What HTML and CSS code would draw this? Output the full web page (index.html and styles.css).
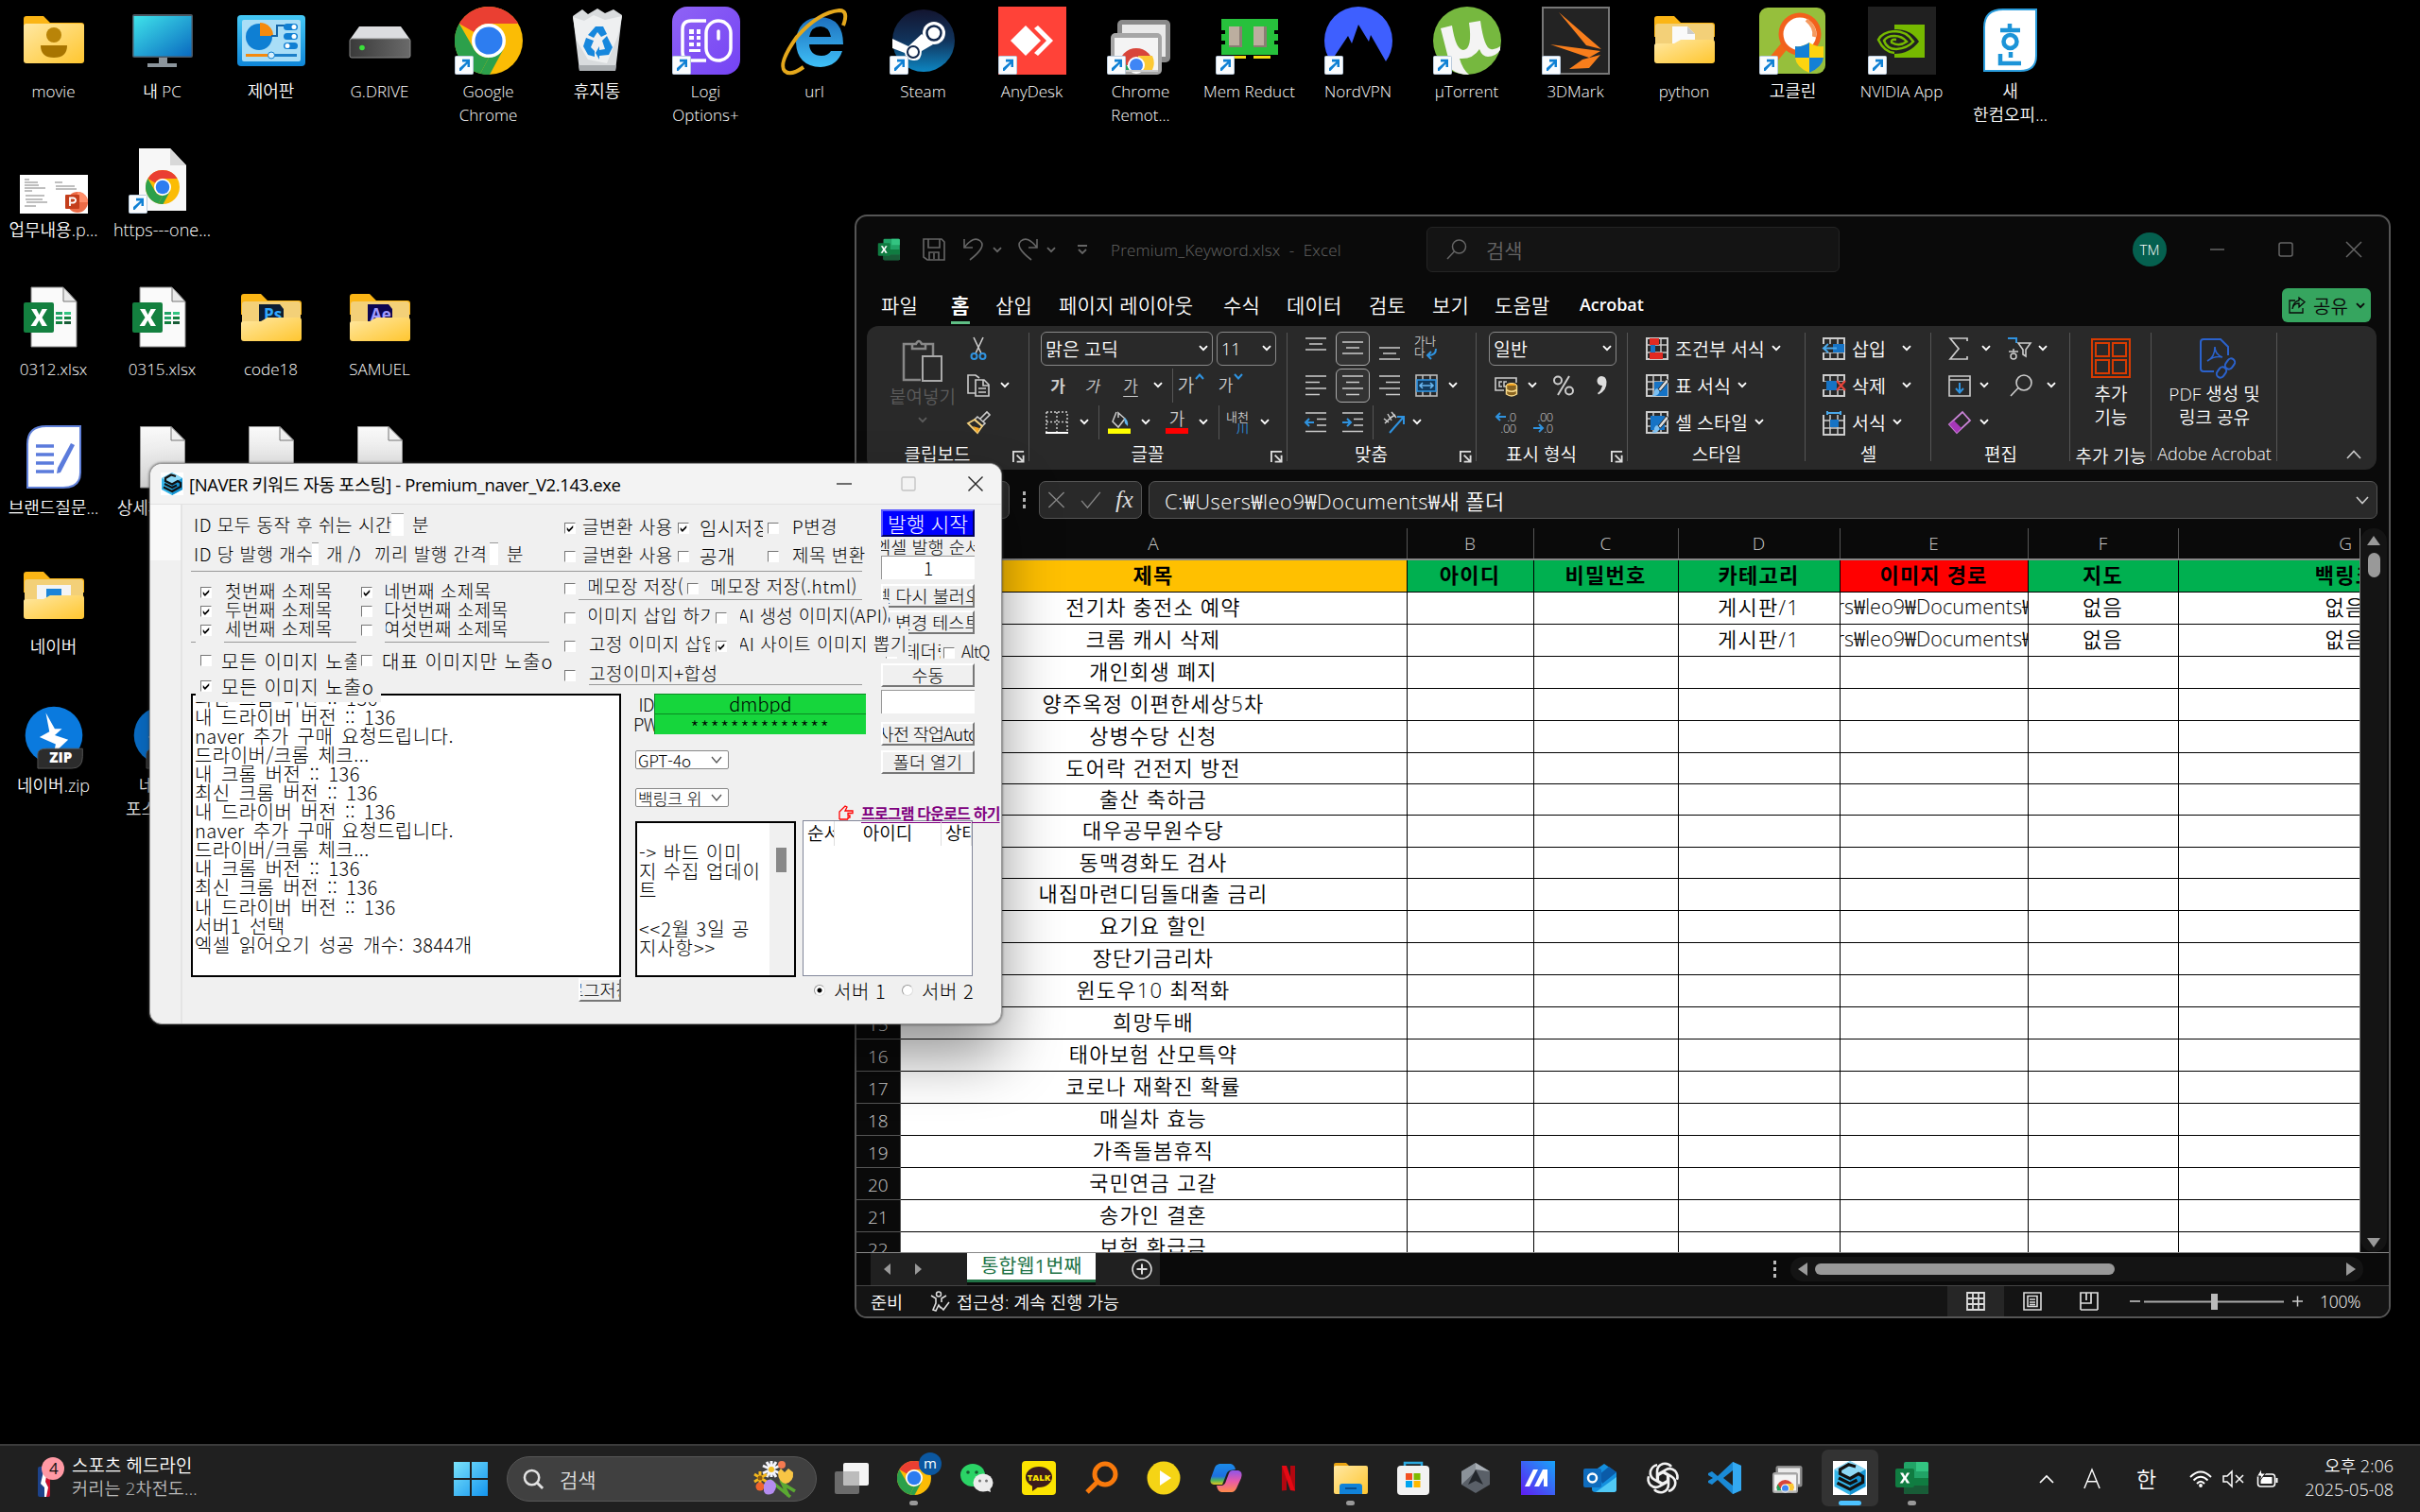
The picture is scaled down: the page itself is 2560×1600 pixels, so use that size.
FILE: index.html
```html
<!DOCTYPE html>
<html lang="ko">
<head>
<meta charset="utf-8">
<title>Desktop</title>
<link rel="stylesheet" href="styles.css">
</head>
<body>
<svg class="defs" width="0" height="0" aria-hidden="true">
<defs>
<linearGradient id="gFold" x1="0" y1="0" x2="1" y2="1"><stop offset="0" stop-color="#ffe8a3"/><stop offset="1" stop-color="#ffc62f"/></linearGradient>
<linearGradient id="gPc" x1="0" y1="0" x2="1" y2="1"><stop offset="0" stop-color="#3fe3ea"/><stop offset="1" stop-color="#0a6ac0"/></linearGradient>
<linearGradient id="gCtl" x1="0" y1="0" x2="0" y2="1"><stop offset="0" stop-color="#45c8f5"/><stop offset="1" stop-color="#0f86d8"/></linearGradient>
<linearGradient id="gLogi" x1="0" y1="0" x2="1" y2="1"><stop offset="0" stop-color="#8f63f5"/><stop offset="1" stop-color="#7443f4"/></linearGradient>
<linearGradient id="gSteam" x1="0" y1="0" x2="0" y2="1"><stop offset="0" stop-color="#131530"/><stop offset=".5" stop-color="#11345c"/><stop offset="1" stop-color="#0d86c2"/></linearGradient>
<linearGradient id="gWin" x1="0" y1="0" x2="1" y2="1"><stop offset="0" stop-color="#7be3fb"/><stop offset="1" stop-color="#1394ee"/></linearGradient>
<linearGradient id="gPaper" x1="0" y1="0" x2="0" y2="1"><stop offset="0" stop-color="#fafafa"/><stop offset="1" stop-color="#dcdcdc"/></linearGradient>
<linearGradient id="gDrive" x1="0" y1="0" x2="1" y2="0"><stop offset="0" stop-color="#3a3a3a"/><stop offset="1" stop-color="#6a6a6a"/></linearGradient>
<linearGradient id="gIe" x1="0" y1="0" x2="0" y2="1"><stop offset="0" stop-color="#1d6fbe"/><stop offset="1" stop-color="#3fc0f7"/></linearGradient>
<linearGradient id="gCopA" x1="0" y1="0" x2="0" y2="1"><stop offset="0" stop-color="#1b8be8"/><stop offset=".6" stop-color="#1d6fe0"/><stop offset=".8" stop-color="#4fb55b"/><stop offset="1" stop-color="#e9c81e"/></linearGradient>
<linearGradient id="gCopB" x1="0" y1="0" x2="0" y2="1"><stop offset="0" stop-color="#8f55e8"/><stop offset=".5" stop-color="#e85aa8"/><stop offset="1" stop-color="#ff8a4a"/></linearGradient>
<linearGradient id="gMa" x1="1" y1="0" x2="0" y2="1"><stop offset="0" stop-color="#18a5f8"/><stop offset="1" stop-color="#5f1cf2"/></linearGradient>

<symbol id="shortcut" viewBox="0 0 20 20"><rect x=".5" y=".5" width="19" height="19" rx="1" fill="#fafcfe" stroke="#bcd"/><path d="M5 16V13L12.500 6.500H8V3.800H16V12H13.500V8.600L6.500 16Z" fill="#0f80d4"/></symbol>
<symbol id="folder" viewBox="0 0 64 52"><path d="M0 4q0-3 3-3h18l7 7h33q3 0 3 3v12H0z" fill="#fbb515"/><rect x="0" y="9" width="64" height="42" rx="3" fill="url(#gFold)"/></symbol>
<symbol id="folderOpen" viewBox="0 0 64 52"><path d="M0 4q0-3 3-3h18l7 7h33q3 0 3 3v12H0z" fill="#fbb515"/><rect x="1" y="9" width="62" height="40" rx="3" fill="#f3d078"/></symbol>
<symbol id="folderFront" viewBox="0 0 64 26"><path d="M0 6Q0 4 3 4H21L28 0H61Q64 0 64 3V22Q64 25 61 25H3Q0 25 0 22Z" fill="url(#gFold)"/></symbol>
<symbol id="chrome" viewBox="0 0 72 72"><circle cx="36" cy="36" r="36" fill="#fbbc05"/><path d="M36 0A36 36 0 0 1 67.200 18H36A18 18 0 0 0 20.400 27L4.800 18A36 36 0 0 1 36 0Z" fill="#ea3f32"/><path d="M4.800 18L20.400 45A18 18 0 0 0 36 54L27 71A36 36 0 0 1 4.800 18Z" fill="#2ca04b"/><path d="M36 54L51.600 45L37 72A36 36 0 0 1 27 71Z" fill="#2ca04b"/><circle cx="36" cy="36" r="18" fill="#fff"/><circle cx="36" cy="36" r="14.500" fill="#2d7df0"/></symbol>
<symbol id="xlFile" viewBox="0 0 72 72"><path d="M12 3H46L60 18V66H12Z" fill="#fafafa" stroke="#888"/><path d="M46 3V18H60Z" fill="#e9e9e9" stroke="#777"/><rect x="4" y="19" width="32" height="32" rx="2" fill="#13803f"/><path d="M12 26h5.500l3 6 3-6H29l-5.500 9L29 44h-5.500l-3.200-6-3.300 6H11.500L17.500 35z" fill="#fff"/><path d="M38 29h7v3h-7zM38 34h7v3h-7z" fill="#21a366"/><path d="M47 29h7v3h-7z" fill="#33c481"/><path d="M47 34h7v3h-7zM38 39h7v3h-7z" fill="#13803f"/><path d="M47 39h7v3h-7z" fill="#185c37"/></symbol>
<symbol id="paper" viewBox="0 0 72 72"><path d="M12.500 3.500H45L59.500 18V68H12.500Z" fill="url(#gPaper)" stroke="#999"/><path d="M45 3.500V18H59.500Z" fill="#f0f0f0" stroke="#777"/></symbol>
<symbol id="zip" viewBox="0 0 72 72"><circle cx="36" cy="36" r="32" fill="#0a7ade"/><path d="M27 11L37 29H45L37 36L52 41L36 56L38 46L20 38L31 32Z" fill="#fff"/><path d="M18 57Q18 51 28 51H68V60Q68 73 56 73H18Z" fill="#2c2c2c" stroke="#555"/></symbol>
<symbol id="xl" viewBox="0 0 36 36"><rect x="9" y="1" width="26" height="34" rx="2" fill="#21a366"/><path d="M22 1h11q2 0 2 2v8H22z" fill="#33c481"/><path d="M9 18H35v8H9z" fill="#107c41"/><path d="M9 26H35v7q0 2-2 2H11q-2 0-2-2z" fill="#185c37"/><rect x="0" y="8" width="20" height="20" rx="2" fill="#107c41"/><path d="M5 12.500h3.200l2 3.800 2-3.800h3l-3.500 5.500 3.600 5.500H12l-2-3.800-2.100 3.800H4.700L8.400 18z" fill="#fff"/></symbol>
<symbol id="cube" viewBox="0 0 24 24"><rect width="24" height="24" fill="#fff"/><path d="M12 0L23 6V18L12 24L1 18V6Z" fill="#35b6ea"/><path d="M12 0L23 6L12 12L1 6Z" fill="#8ed9f6"/><path d="M12 12L23 6V18L12 24Z" fill="#1593d2"/><path d="M16 4L11 2.500L5 6V9L12 12.500L18 9L21 11V15L12 20L3 15.500M4 12L12 16L17 13.500" fill="none" stroke="#111" stroke-width="2.200"/></symbol>
<symbol id="crd" viewBox="0 0 72 72"><rect x="11" y="14" width="56" height="45" rx="5" fill="#8a8a8a"/><rect x="16" y="19" width="46" height="34" fill="#e9e9e9"/><rect x="4" y="28" width="54" height="44" rx="5" fill="#a6a6a6"/><rect x="8" y="33" width="46" height="34" fill="#f4f4f4"/><path d="M13 62A18 18 0 0 1 49 62Z" fill="#d8453a"/><path d="M14 67A18 18 0 0 1 15 53L24 67Z" fill="#20a05a"/><path d="M33 52H48A18 18 0 0 1 48 67H33Z" fill="#fcc934"/><circle cx="31" cy="62" r="9" fill="#fff"/><circle cx="31" cy="62" r="7" fill="#3f86f5"/><rect x="8" y="67" width="46" height="2" fill="#ccc"/></symbol>
<symbol id="chev" viewBox="0 0 10 7"><path d="M1 1.200L5 5.200L9 1.200" fill="none" stroke="currentColor" stroke-width="1.900"/></symbol>
<symbol id="launch" viewBox="0 0 14 14"><path d="M1 13V1H13M5 5L12 12M12.500 5V12.500H5" fill="none" stroke="#ddd" stroke-width="2"/></symbol>
<symbol id="gridIco" viewBox="0 0 24 24"><rect x="1" y="1" width="22" height="22" fill="none" stroke="#ccc" stroke-width="2"/><path d="M8 1V23M16 1V23M1 8H23M1 16H23" stroke="#ccc" stroke-width="1.500"/></symbol>
<symbol id="brush" viewBox="0 0 24 24"><path d="M22 5L13 16L15.500 18L24 8Z" fill="#ddd" stroke="#292929"/><path d="M12 15Q15 17 14 20Q11 24 6 23Q9 22 9 18Q10 15 12 15Z" fill="#7cc0f2"/></symbol>
<symbol id="tick" viewBox="0 0 13 13"><path d="M3 5.500L5.300 8L10 3.200V6L5.300 10.800L3 8.500Z" fill="#000"/></symbol>
</defs>
</svg>

<main class="desktop">

<section class="icons">
 <figure><svg viewBox="0 0 72 72"><use href="#folder" x="4" y="9" width="64" height="52"/><circle cx="36" cy="30" r="8" fill="#b98408"/><path d="M22 41H50Q50 54 36 54Q22 54 22 41Z" fill="#a87500"/></svg><figcaption>movie</figcaption></figure>
 <figure><svg viewBox="0 0 72 72"><rect x="4" y="8" width="64" height="46" rx="2" fill="#4b5560"/><rect x="5.500" y="10" width="61" height="42.500" fill="url(#gPc)"/><path d="M32 54h9v6h10v4H20v-4h12z" fill="#8c959c"/></svg><figcaption>내 PC</figcaption></figure>
 <figure><svg viewBox="0 0 72 72"><rect x="0" y="9" width="72" height="54" rx="4" fill="url(#gCtl)"/><rect x="5" y="14" width="62" height="44" rx="2" fill="#a9def7"/><circle cx="23" cy="32" r="14" fill="#0f7fd3"/><path d="M24 17A14 14 0 0 1 38 31H24Z" fill="#f58a0e"/><path d="M36 31h6V20h8" fill="none" stroke="#1264a8" stroke-width="2"/><rect x="49" y="18" width="15" height="7" rx="3.500" fill="#0f7fd3"/><rect x="49" y="28" width="15" height="7" rx="3.500" fill="#0f7fd3"/><rect x="49" y="38" width="15" height="7" rx="3.500" fill="#0f7fd3"/><circle cx="60" cy="21.500" r="2.500" fill="#fff"/><circle cx="60" cy="31.500" r="2.500" fill="#fff"/><circle cx="53" cy="41.500" r="2.500" fill="#fff"/><path d="M9 51.500H36" stroke="#f58a0e" stroke-width="3"/><path d="M36 51.500H63" stroke="#1c7fc8" stroke-width="3"/><circle cx="36" cy="51.500" r="3.500" fill="#d8f0fc" stroke="#0f7fd3"/></svg><figcaption class="ko">제어판</figcaption></figure>
 <figure><svg viewBox="0 0 72 72"><path d="M14 21H58L68 35H4Z" fill="#dcdde0"/><rect x="4" y="34" width="64" height="20" rx="2" fill="url(#gDrive)" stroke="#888"/><circle cx="17" cy="43.500" r="2.800" fill="#3be03b"/></svg><figcaption>G.DRIVE</figcaption></figure>
 <figure><svg viewBox="0 0 72 72"><use href="#chrome" width="72" height="72"/><use href="#shortcut" x="0" y="52" width="20" height="20"/></svg><figcaption>Google<br>Chrome</figcaption></figure>
 <figure><svg viewBox="0 0 72 72"><path d="M10 10L20 3L26 8L36 2L44 7L53 3L62 9L55 68H17Z" fill="#d9dcde"/><path d="M10 11L22 15L32 9L44 14L62 10L58 30L46 60L26 56L14 36Z" fill="#eef0f1"/><path d="M16 62H56L55 68H17Z" fill="#a9adb0"/><path d="M34 21L42 21L46 29L40 32L36 27L32 33L26 30Z M24 33L32 36L29 43L33 47V53L26 51L21 42Z M46 31L52 43L48 51L38 52V56L34 49L38 42V46L44 45L41 36Z" fill="#1687dd"/></svg><figcaption class="ko">휴지통</figcaption></figure>
 <figure><svg viewBox="0 0 72 72"><rect width="72" height="72" rx="16" fill="url(#gLogi)"/><path d="M36 15H20Q11 15 11 24V48Q11 57 20 57H36" fill="none" stroke="#fff" stroke-width="3.500"/><rect x="36" y="15" width="26" height="42" rx="13" fill="none" stroke="#fff" stroke-width="3.500"/><path d="M49 26V34" stroke="#fff" stroke-width="3.500" stroke-linecap="round"/><path d="M18 24h5v5h-5zM26 24h4v5h-4zM18 31h5v4h-5zM26 31h4v4h-4zM18 38h5v4h-5zM26 38h4v4h-4zM18 45h12v3H18z" fill="#fff"/><use href="#shortcut" x="0" y="52" width="20" height="20"/></svg><figcaption>Logi<br>Options+</figcaption></figure>
 <figure><svg viewBox="0 0 72 72"><path d="M66 40H30Q31 52 43 52Q50 52 53 47H65Q60 63 42 64Q17 63 16 38Q17 12 42 11Q66 12 66 40ZM30 32H53Q51 21 42 21Q32 21 30 32Z" fill="url(#gIe)"/><path d="M66 20Q72 4 62 4Q40 6 17 32Q-3 60 4 68Q10 74 24 64" fill="none" stroke="#e5a81c" stroke-width="4"/></svg><figcaption>url</figcaption></figure>
 <figure><svg viewBox="0 0 72 72"><circle cx="36" cy="36" r="33" fill="url(#gSteam)"/><circle cx="47" cy="28" r="12" fill="#fff"/><circle cx="47" cy="28" r="7.500" fill="#fff" stroke="#10264a" stroke-width="2.500"/><path d="M3 34L20 42L34 29L46 40L34 47Q34 58 25 57Q17 56 16 49L3 44Z" fill="#fff"/><circle cx="25" cy="48" r="6" fill="none" stroke="#10264a" stroke-width="2"/><use href="#shortcut" x="0" y="52" width="20" height="20"/></svg><figcaption>Steam</figcaption></figure>
 <figure><svg viewBox="0 0 72 72"><rect width="72" height="72" fill="#ff4238"/><path d="M29 20L45 36L29 52L13 36Z" fill="#fff"/><path d="M38 23L42 20L58 36L42 52L38 49L51 36Z" fill="#fff"/><use href="#shortcut" x="0" y="52" width="20" height="20"/></svg><figcaption>AnyDesk</figcaption></figure>
 <figure><svg viewBox="0 0 72 72"><use href="#crd" width="72" height="72"/><use href="#shortcut" x="0" y="52" width="20" height="20"/></svg><figcaption>Chrome<br>Remot...</figcaption></figure>
 <figure><svg viewBox="0 0 72 72"><path d="M6 13H66V25H62V29H66V36H62V40H66V51H6V40H10V36H6V29H10V25H6Z" fill="#27c13c"/><path d="M14 21H28V43H14ZM40 21H54V43H40Z" fill="#8b7d74"/><path d="M14 21H25V41H14ZM40 21H51V41H40Z" fill="#bcae9f"/><path d="M13 52H32V55H13ZM40 52H58V55H40Z" fill="#f4dd13"/><use href="#shortcut" x="0" y="52" width="20" height="20"/></svg><figcaption>Mem Reduct</figcaption></figure>
 <figure><svg viewBox="0 0 72 72"><path d="M7 58Q0 48 0 36A36 36 0 0 1 72 36Q72 48 65 58L49 30L47 37L36 19L29 39L25 31Z" fill="#3e5fff"/><use href="#shortcut" x="0" y="52" width="20" height="20"/></svg><figcaption>NordVPN</figcaption></figure>
 <figure><svg viewBox="0 0 72 72"><circle cx="36" cy="36" r="36" fill="#76b83f"/><path d="M8 23L20 20Q24 46 32 46Q42 45 38 17L50 15Q54 44 61 45Q66 46 71 42V46Q66 53 58 53Q52 53 49 45Q42 56 28 55Q31 66 38 72Q26 72 19 66Z" fill="#f4f4f4"/><use href="#shortcut" x="0" y="52" width="20" height="20"/></svg><figcaption>µTorrent</figcaption></figure>
 <figure><svg viewBox="0 0 72 72"><rect x="1" y="1" width="70" height="70" fill="#232323" stroke="#777" stroke-width="2"/><path d="M18 6L63 45L47 41ZM9 40L62 47L50 54ZM62 51L50 65L29 66L43 56Z" fill="#f97e1c"/><use href="#shortcut" x="0" y="52" width="20" height="20"/></svg><figcaption>3DMark</figcaption></figure>
 <figure><svg viewBox="0 0 72 72"><use href="#folderOpen" x="4" y="9" width="64" height="52"/><path d="M23 21H39L47 29V45H23Z" fill="#fafafa"/><path d="M39 21V29H47Z" fill="#ccc"/><path d="M27 40A10 10 0 0 1 43 40Z" fill="#d93a2c"/><use href="#folderFront" x="4" y="35" width="64" height="26"/></svg><figcaption>python</figcaption></figure>
 <figure><svg viewBox="0 0 72 72"><rect y="1" width="70" height="70" rx="9" fill="#96bf3c"/><path d="M14 57L28 40" stroke="#f06818" stroke-width="9"/><circle cx="43" cy="29" r="20" fill="#fff" stroke="#f2611c" stroke-width="5"/><path d="M50 14Q60 22 58 32" stroke="#f59a60" stroke-width="4" fill="none"/><path d="M38 42Q46 43 53 38Q60 43 68 42V54Q67 64 53 70Q39 64 38 54Z" fill="#fdd40f"/><path d="M53 38Q46 43 38 42V54H53ZM53 54H68Q67 64 53 70Z" fill="#1380d6"/><use href="#shortcut" x="0" y="52" width="20" height="20"/></svg><figcaption class="ko">고클린</figcaption></figure>
 <figure><svg viewBox="0 0 72 72"><rect width="72" height="72" fill="#202020"/><path d="M28 19H60V54H28Z" fill="#76b900"/><path d="M28 24Q46 24 54 37Q44 50 28 50Q18 50 9 35Q16 25 28 24Z" fill="#202020"/><path d="M28 26Q15 27 11 35Q17 48 28 49M28 31Q20 31 17 36Q20 45 30 45Q42 44 48 37Q41 26 28 26M28 31Q36 31 41 37Q33 43 25 38Q24 34 30 35" fill="none" stroke="#76b900" stroke-width="2.500"/><use href="#shortcut" x="0" y="52" width="20" height="20"/></svg><figcaption>NVIDIA App</figcaption></figure>
 <figure><svg viewBox="0 0 72 72"><path d="M8 68V22Q8 3 28 3H63V52Q63 68 46 68Z" fill="#fff" stroke="#2b9ddd" stroke-width="2"/><path d="M25 25H46M35 18V25M25 50V60H47" stroke="#1c94d8" stroke-width="4.500" fill="none"/><circle cx="35.500" cy="37" r="7" fill="none" stroke="#1c94d8" stroke-width="4.500"/><path d="M36 48V54" stroke="#1c94d8" stroke-width="4.500"/></svg><figcaption class="ko">새<br>한컴오피...</figcaption></figure>

 <figure class="r2"><svg viewBox="0 0 72 72"><rect y="31" width="72" height="41" fill="#fff"/><path d="M5 36h5M5 39h14M5 42h15M5 45h22M5 48h8M6 53h20M6 57h18M7 60h22M5 64h12M37 39h8M38 43h20M38 46h22" stroke="#aaa" stroke-width="1.500"/><circle cx="61" cy="60" r="11" fill="#ed6c47"/><path d="M61 49A11 11 0 0 1 72 60H61Z" fill="#ff8f6b"/><rect x="48" y="52" width="15" height="15" rx="1" fill="#c43e1c"/><path d="M53 64V55.500H56.500Q59.500 56 59 58.500Q58.500 61 54 60.500" stroke="#fff" stroke-width="1.800" fill="none"/></svg><figcaption class="ko">업무내용.p...</figcaption></figure>
 <figure><svg viewBox="0 0 72 72"><path d="M11 3H44L61 21V69H11Z" fill="#f7f7f7"/><path d="M44 3V21H61Z" fill="#d8d8d8"/><use href="#chrome" x="18" y="26" width="36" height="36"/><use href="#shortcut" x="0" y="52" width="20" height="20"/></svg><figcaption class="ko">https---one...</figcaption></figure>

 <figure class="r3"><svg viewBox="0 0 72 72"><use href="#xlFile"/></svg><figcaption>0312.xlsx</figcaption></figure>
 <figure><svg viewBox="0 0 72 72"><use href="#xlFile"/></svg><figcaption>0315.xlsx</figcaption></figure>
 <figure><svg viewBox="0 0 72 72"><use href="#folderOpen" x="4" y="9" width="64" height="52"/><path d="M23 21H45L49 26V46H23Z" fill="#0c1d33"/><text x="28" y="38" class="adobe ps">Ps</text><use href="#folderFront" x="4" y="35" width="64" height="26"/></svg><figcaption>code18</figcaption></figure>
 <figure><svg viewBox="0 0 72 72"><use href="#folderOpen" x="4" y="9" width="64" height="52"/><path d="M23 21H45L49 26V46H23Z" fill="#0b0552"/><text x="26" y="38" class="adobe ae">Ae</text><use href="#folderFront" x="4" y="35" width="64" height="26"/></svg><figcaption>SAMUEL</figcaption></figure>

 <figure class="r4"><svg viewBox="0 0 72 72"><path d="M8 68V22Q8 3 28 3H64V52Q64 68 46 68Z" fill="#fff" stroke="#6080d8" stroke-width="2"/><path d="M17 24H36M17 33H36M17 42H36M17 51H36" stroke="#5b7bdc" stroke-width="3.500"/><path d="M54 21L58 23L43 52L39 53L40 47Z" fill="#5b7bdc"/></svg><figcaption class="ko">브랜드질문...</figcaption></figure>
 <figure><svg viewBox="0 0 72 72"><use href="#paper"/></svg><figcaption class="ko">상세페이지...</figcaption></figure>
 <figure><svg viewBox="0 0 72 72"><use href="#paper"/></svg></figure>
 <figure><svg viewBox="0 0 72 72"><use href="#paper"/></svg></figure>

 <figure class="r5"><svg viewBox="0 0 72 72"><use href="#folderOpen" x="4" y="9" width="64" height="52"/><path d="M18 24H54V46H18Z" fill="#f4f4f4"/><path d="M28 28H44V46H28Z" fill="#1b84d8"/><use href="#folderFront" x="4" y="35" width="64" height="26"/></svg><figcaption class="ko">네이버</figcaption></figure>

 <figure class="r6"><svg viewBox="0 0 72 76"><use href="#zip" width="72" height="76"/><text x="31" y="69" class="ziptext">ZIP</text></svg><figcaption class="ko">네이버.zip</figcaption></figure>
 <figure><svg viewBox="0 0 72 76"><use href="#zip" width="72" height="76"/></svg><figcaption class="ko">네이버<br>포스팅.zip</figcaption></figure>
</section>

<section class="excel">
 <header class="xl-title">
  <svg class="xl-logo" viewBox="0 0 36 36"><use href="#xl"/></svg>
  <svg class="q-save" viewBox="0 0 24 24"><path d="M1 1H20L23 4V23H5L1 20Z M6 1V10H18V1 M7 23V15H17V23 M12 16V22" fill="none" stroke="currentColor" stroke-width="1.600"/></svg>
  <svg class="q-undo" viewBox="0 0 24 24"><path d="M2 1V10H11M2 10Q12 -3 19 3Q26 9 8 23" fill="none" stroke="currentColor" stroke-width="1.600"/></svg>
  <svg class="chev"><use href="#chev"/></svg>
  <svg class="q-redo" viewBox="0 0 24 24"><path d="M22 1V10H13M22 10Q12 -3 5 3Q-2 9 16 23" fill="none" stroke="currentColor" stroke-width="1.600"/></svg>
  <svg class="chev"><use href="#chev"/></svg>
  <svg class="q-more" viewBox="0 0 12 12"><path d="M1 2H11M2 6L6 10L10 6" fill="none" stroke="currentColor" stroke-width="1.800"/></svg>
  <span class="xl-name">Premium_Keyword.xlsx&nbsp; -&nbsp; Excel</span>
  <div class="xl-search"><svg viewBox="0 0 22 22"><circle cx="13.500" cy="8" r="7" fill="none" stroke="currentColor" stroke-width="1.500"/><path d="M8.500 13L1 21" stroke="currentColor" stroke-width="1.500"/></svg>검색</div>
  <span class="avatar">TM</span>
  <svg class="wc" viewBox="0 0 16 16"><path d="M0 8H15" stroke="currentColor" stroke-width="1.500"/></svg>
  <svg class="wc" viewBox="0 0 16 16"><rect x="1" y="1" width="14" height="14" rx="2" fill="none" stroke="currentColor" stroke-width="1.500"/></svg>
  <svg class="wc" viewBox="0 0 16 16"><path d="M0 0L16 16M16 0L0 16" stroke="currentColor" stroke-width="1.500"/></svg>
 </header>
 <nav class="tabs"><span class="t1">파일</span><span class="t2">홈</span><span class="t3">삽입</span><span class="t4">페이지 레이아웃</span><span class="t5">수식</span><span class="t6">데이터</span><span class="t7">검토</span><span class="t8">보기</span><span class="t9">도움말</span><span class="t10">Acrobat</span>
  <span class="share"><svg viewBox="0 0 18 18"><path d="M7 4H1V17H15V12M4 13Q5 7 11 7V11L17 5.500L11 1V4Q5 5 4 13Z" fill="none" stroke="#0a0a0a" stroke-width="1.300"/></svg>공유<svg class="chev"><use href="#chev"/></svg></span>
 </nav>

 <div class="ribbon">
  <div class="group g-clip">
   <div class="paste"><svg viewBox="0 0 42 46"><path d="M12 5H1V43H19M24 5H32V17M10 10V5H14Q17 -1 20 5H24V10Z" transform="translate(0 1)" fill="none" stroke="#888" stroke-width="2.500"/><rect x="21" y="19" width="20" height="26" fill="none" stroke="#aaa" stroke-width="2"/></svg><span>붙여넣기</span><svg class="chev"><use href="#chev"/></svg></div>
   <div class="rr"><svg class="i24" viewBox="0 0 24 24"><path d="M7 0L15 17M17 0L9 17" stroke="#ccc" stroke-width="1.600"/><circle cx="7.500" cy="20" r="3" fill="none" stroke="#2f93e0" stroke-width="2"/><circle cx="16.500" cy="20" r="3" fill="none" stroke="#2f93e0" stroke-width="2"/></svg></div>
   <div class="rr"><svg class="i24" viewBox="0 0 24 24"><path d="M9 20H1V1H9L13 4M9 6H18L23 11V23H9ZM17 6V12H23M12 15H20M12 19H20" fill="none" stroke="#ccc" stroke-width="1.600"/></svg><svg class="chev"><use href="#chev"/></svg></div>
   <div class="rr"><svg class="i24" viewBox="0 0 24 24"><path d="M14 8L21 1L24 4L17 11M11 6L19 13L16 16L8 9Z" fill="none" stroke="#ccc" stroke-width="1.600"/><path d="M8 9L16 16L11 23L1 13Z" fill="none" stroke="#f2cf7c" stroke-width="1.800"/><path d="M6 16L13 18L11 23Z" fill="#f5a623"/></svg></div>
   <div class="glabel"><span>클립보드</span><svg><use href="#launch"/></svg></div>
  </div>
  <div class="group g-font">
   <div class="rr"><span class="combo c-font">맑은 고딕<svg class="chev"><use href="#chev"/></svg></span><span class="combo c-size">11<svg class="chev"><use href="#chev"/></svg></span></div>
   <div class="rr f2"><b>가</b><i>가</i><u>가</u><svg class="chev"><use href="#chev"/></svg><s></s><span class="grow">가<svg viewBox="0 0 10 7"><path d="M1 6L5 1.500L9 6" fill="none" stroke="#2f93e0" stroke-width="2"/></svg></span><span class="grow sm">가<svg viewBox="0 0 10 7"><path d="M1 1L5 5.500L9 1" fill="none" stroke="#2f93e0" stroke-width="2"/></svg></span></div>
   <div class="rr f3"><svg class="i24" viewBox="0 0 24 24"><path d="M1 1H23V22M1 1V22M12 1V22M1 11.500H23" fill="none" stroke="#ccc" stroke-width="1.500" stroke-dasharray="2 2"/><path d="M0 23H24" stroke="#fff" stroke-width="2"/></svg><svg class="chev"><use href="#chev"/></svg><s></s><svg class="i24" viewBox="0 0 24 24"><path d="M9 1L5 11L11 17L18 8L11 2V7" fill="none" stroke="#ccc" stroke-width="1.500"/><path d="M17 7Q22 9 21 16L18 13Z" fill="#5fb2ea"/><rect y="18.500" width="24" height="5.500" fill="#ff0"/></svg><svg class="chev"><use href="#chev"/></svg><span class="fcol">가</span><svg class="chev"><use href="#chev"/></svg><s></s><span class="hanja">내천<br><em>川</em></span><svg class="chev"><use href="#chev"/></svg></div>
   <div class="glabel"><span>글꼴</span><svg><use href="#launch"/></svg></div>
  </div>
  <div class="group g-align">
   <div class="rr a1"><svg class="i24" viewBox="0 0 24 24"><path d="M1 1H23M5 7H19M1 13H23" stroke="#ccc" stroke-width="1.600"/></svg><span class="on"><svg class="i24" viewBox="0 0 24 24"><path d="M1 5H23M5 11H19M1 17H23" stroke="#ccc" stroke-width="1.600"/></svg></span><svg class="i24" viewBox="0 0 24 24"><path d="M1 11H23M5 17H19M1 23H23" stroke="#ccc" stroke-width="1.600"/></svg><span class="wrap">가나<br>다<svg viewBox="0 0 12 12"><path d="M11 0Q11 7 3 7M6 3L2 7L6 11" fill="none" stroke="#2f93e0" stroke-width="2"/></svg></span></div>
   <div class="rr a1"><svg class="i24" viewBox="0 0 24 24"><path d="M1 2H23M1 8.500H16M1 15H23M1 21.500H16" stroke="#ccc" stroke-width="1.600"/></svg><span class="on"><svg class="i24" viewBox="0 0 24 24"><path d="M1 2H23M5 8.500H19M1 15H23M5 21.500H19" stroke="#ccc" stroke-width="1.600"/></svg></span><svg class="i24" viewBox="0 0 24 24"><path d="M1 2H23M8 8.500H23M1 15H23M8 21.500H23" stroke="#ccc" stroke-width="1.600"/></svg><svg class="i24" viewBox="0 0 24 24"><rect x="1" y="1" width="22" height="22" fill="none" stroke="#bbb" stroke-width="1.600"/><path d="M8 1V6M16 1V6M8 18V23M16 18V23" stroke="#bbb" stroke-width="1.600"/><rect x="2" y="6" width="20" height="12" fill="#123a5c" stroke="#2f93e0" stroke-width="1.600"/><path d="M5 12H19M8 9L5 12L8 15M16 9L19 12L16 15" fill="none" stroke="#6ab8f0" stroke-width="1.600"/></svg><svg class="chev"><use href="#chev"/></svg></div>
   <div class="rr a3"><svg class="i24" viewBox="0 0 24 24"><path d="M1 2H23M13 8.500H23M13 15H23M1 21.500H23" stroke="#ccc" stroke-width="1.600"/><path d="M10 12H1M5 8L1 12L5 16" fill="none" stroke="#2f93e0" stroke-width="2"/></svg><svg class="i24" viewBox="0 0 24 24"><path d="M1 2H23M13 8.500H23M13 15H23M1 21.500H23" stroke="#ccc" stroke-width="1.600"/><path d="M1 12H10M6 8L10 12L6 16" fill="none" stroke="#2f93e0" stroke-width="2"/></svg><span class="orient"><svg class="i24" viewBox="0 0 24 24"><path d="M7 23L22 6M22 14V6H15" fill="none" stroke="#2f93e0" stroke-width="2"/><path d="M1 8L6 12M5 3L9 10M2 13L7 8M9 1L14 7M8 7L13 4" stroke="#ccc" stroke-width="1.500"/></svg></span><svg class="chev"><use href="#chev"/></svg></div>
   <div class="glabel"><span>맞춤</span><svg><use href="#launch"/></svg></div>
  </div>
  <div class="group g-num">
   <div class="rr"><span class="combo c-num">일반<svg class="chev"><use href="#chev"/></svg></span></div>
   <div class="rr n2"><svg class="i24" viewBox="0 0 24 24"><path d="M10 17H1V4H23V9" fill="none" stroke="#ccc" stroke-width="1.600"/><path d="M8 8H5V13H8M13 8H10V13H13" fill="none" stroke="#ccc" stroke-width="1.500"/><ellipse cx="18" cy="12" rx="5.500" ry="2.500" fill="#f5a623" stroke="#f7d98a"/><path d="M12.500 12V21Q18 25 23.500 21V12M12.500 16.500Q18 20 23.500 16.500" fill="#8a6420" stroke="#f7d98a" stroke-width="1.500"/></svg><svg class="chev"><use href="#chev"/></svg><svg class="i24" viewBox="0 0 24 24"><circle cx="6" cy="6.500" r="4" fill="none" stroke="#ccc" stroke-width="2"/><circle cx="18" cy="17.500" r="4" fill="none" stroke="#ccc" stroke-width="2"/><path d="M18 2L6 22" stroke="#ccc" stroke-width="2"/></svg><svg class="i24" viewBox="0 0 24 24"><path d="M12 2A5 5 0 1 0 13 12Q12 17 8 20L9 21.500Q18 17 17.500 8Q17 2 12 2Z" fill="#ddd"/></svg></div>
   <div class="rr n3"><span class="dec"><svg viewBox="0 0 12 10"><path d="M11 5H1M5 1L1 5L5 9" fill="none" stroke="#2f93e0" stroke-width="2"/></svg>.0<br>.00</span><span class="dec">.00<br><svg viewBox="0 0 12 10"><path d="M1 5H11M7 1L11 5L7 9" fill="none" stroke="#2f93e0" stroke-width="2"/></svg>.0</span></div>
   <div class="glabel"><span>표시 형식</span><svg><use href="#launch"/></svg></div>
  </div>
  <div class="group g-style">
   <div class="rr"><svg class="i24" viewBox="0 0 24 24"><use href="#gridIco"/><path d="M4 1H14V8H4ZM4 16H18V23H4Z" fill="#e02a22"/><path d="M5 8H10V16H5Z" fill="#1673c5"/></svg><span>조건부 서식</span><svg class="chev"><use href="#chev"/></svg></div>
   <div class="rr"><svg class="i24" viewBox="0 0 24 24"><use href="#gridIco"/><path d="M9 8H23V23H9Z" fill="#1673c5"/><use href="#brush"/></svg><span>표 서식</span><svg class="chev"><use href="#chev"/></svg></div>
   <div class="rr"><svg class="i24" viewBox="0 0 24 24"><use href="#gridIco"/><path d="M5 5H20V20H5Z" fill="#1673c5"/><use href="#brush"/></svg><span>셀 스타일</span><svg class="chev"><use href="#chev"/></svg></div>
   <div class="glabel one"><span>스타일</span></div>
  </div>
  <div class="group g-cell">
   <div class="rr"><svg class="i24" viewBox="0 0 24 24"><use href="#gridIco"/><path d="M10 7H23V16H10Z" fill="#1673c5"/><path d="M0 7H11V16H0Z" fill="#292929"/><path d="M15 11.500H1M6 7L1 11.500L6 16" fill="none" stroke="#4aa8ea" stroke-width="2"/></svg><span>삽입</span><svg class="chev"><use href="#chev"/></svg></div>
   <div class="rr"><svg class="i24" viewBox="0 0 24 24"><use href="#gridIco"/><path d="M0 8H24V16H0Z" fill="#292929"/><path d="M4 7H15V17H4Z" fill="#1673c5"/><path d="M15 7L24 17M24 7L15 17" stroke="#e8443a" stroke-width="2.200"/></svg><span>삭제</span><svg class="chev"><use href="#chev"/></svg></div>
   <div class="rr r-fmt"><svg class="i24" viewBox="0 0 24 24"><use href="#gridIco" y="2"/><path d="M8 9H17V17H8Z" fill="#1673c5"/><path d="M0 0H24V4H0Z" fill="#292929"/><path d="M5 2H19M5 0V4M19 0V4" stroke="#4aa8ea" stroke-width="2"/></svg><span>서식</span><svg class="chev"><use href="#chev"/></svg></div>
   <div class="glabel one"><span>셀</span></div>
  </div>
  <div class="group g-edit">
   <div class="rr e1"><svg class="i24" viewBox="0 0 24 24"><path d="M21 4V1H3L12 12L3 23H21V20" fill="none" stroke="#ccc" stroke-width="1.700"/></svg><svg class="chev"><use href="#chev"/></svg><svg class="i24" viewBox="0 0 24 24"><path d="M0 1H9V6" fill="none" stroke="#2f93e0" stroke-width="2"/><path d="M11 6H24L19 13V20L16 18V13Z" fill="none" stroke="#ccc" stroke-width="1.600"/><circle cx="6" cy="20" r="3" fill="none" stroke="#ccc" stroke-width="1.500"/><path d="M1 15H11M6 12V15" stroke="#ccc" stroke-width="1.500"/></svg><svg class="chev"><use href="#chev"/></svg></div>
   <div class="rr e2"><svg class="i24" viewBox="0 0 24 24"><path d="M1 2H23V23H1ZM1 6H23" fill="none" stroke="#ccc" stroke-width="1.600"/><path d="M12 9V19M8 15L12 19.500L16 15" fill="none" stroke="#2f93e0" stroke-width="2"/></svg><svg class="chev"><use href="#chev"/></svg><svg class="i24" viewBox="0 0 24 24"><circle cx="15" cy="9" r="8" fill="none" stroke="#ccc" stroke-width="1.600"/><path d="M9 14.500L1 23" stroke="#ccc" stroke-width="1.600"/></svg><svg class="chev"><use href="#chev"/></svg></div>
   <div class="rr e2"><svg class="i24" viewBox="0 0 24 24"><path d="M15 1L23 10L9 23L1 14Z" fill="none" stroke="#c983d6" stroke-width="1.800"/><path d="M6 10L14 18L9 23L1 14Z" fill="#a637b8"/></svg><svg class="chev"><use href="#chev"/></svg></div>
   <div class="glabel one"><span>편집</span></div>
  </div>
  <div class="group g-add big"><svg viewBox="0 0 42 42"><path d="M1 1H41V41H1ZM5 5H19V19H5ZM23 5H37V19H23ZM5 23H19V37H5ZM23 23H37V37H23Z" fill="none" stroke="#d83b01" stroke-width="2"/></svg><p>추가<br>기능</p><div class="glabel one"><span>추가 기능</span></div></div>
  <div class="group g-pdf big"><svg viewBox="0 0 42 42"><path d="M20 35H9Q6 35 6 32V4Q6 1 9 1H27L35 9V18" fill="none" stroke="#2b62cc" stroke-width="2"/><path d="M13 24Q21 20 21 9M21 9Q21 17 29 20M13 24Q21 18 29 20" fill="none" stroke="#2b62cc" stroke-width="1.600"/><rect x="24" y="30" width="8" height="12" rx="4" transform="rotate(35 28 36)" fill="none" stroke="#2b62cc" stroke-width="2"/><rect x="33" y="21" width="8" height="12" rx="4" transform="rotate(35 37 27)" fill="none" stroke="#2b62cc" stroke-width="2"/></svg><p>PDF 생성 및<br>링크 공유</p><div class="glabel one"><span>Adobe Acrobat</span></div></div>
  <svg class="collapse" viewBox="0 0 16 10"><path d="M1 9L8 1.500L15 9" fill="none" stroke="#ccc" stroke-width="1.600"/></svg>
 </div>

 <div class="fbar">
  <div class="namebox"></div><span class="vdots"><i></i><i></i><i></i></span>
  <div class="fxbox"><svg viewBox="0 0 20 20"><path d="M1 1L19 19M19 1L1 19" stroke="#888" stroke-width="1.500"/></svg><svg viewBox="0 0 24 20"><path d="M1 11L8 19L23 1" fill="none" stroke="#888" stroke-width="1.500"/></svg><em>fx</em></div>
  <div class="formula"><span>C:₩Users₩leo9₩Documents₩새 폴더</span><svg viewBox="0 0 14 9"><path d="M1 1L7 7.500L13 1" fill="none" stroke="#ccc" stroke-width="1.600"/></svg></div>
 </div>

 <div class="sheet">
  <div class="cells">
  <table>
   <colgroup><col class="col-n"><col class="col-a"><col class="col-b"><col class="col-c"><col class="col-d"><col class="col-e"><col class="col-f"><col class="col-g"></colgroup>
   <tr class="cols"><th></th><th>A</th><th>B</th><th>C</th><th>D</th><th>E</th><th>F</th><th>G</th></tr>
   <tr class="head"><th>1</th><td class="gold">제목</td><td>아이디</td><td>비밀번호</td><td>카테고리</td><td class="red">이미지 경로</td><td>지도</td><td>백링크</td></tr>
   <tr><th>2</th><td>전기차 충전소 예약</td><td></td><td></td><td>게시판/1</td><td><div class="over">C:₩Users₩leo9₩Documents₩새 폴더</div></td><td>없음</td><td>없음</td></tr>
   <tr><th>3</th><td>크롬 캐시 삭제</td><td></td><td></td><td>게시판/1</td><td><div class="over">C:₩Users₩leo9₩Documents₩새 폴더</div></td><td>없음</td><td>없음</td></tr>
   <tr><th>4</th><td>개인회생 폐지</td><td></td><td></td><td></td><td></td><td></td><td></td></tr>
   <tr><th>5</th><td>양주옥정 이편한세상5차</td><td></td><td></td><td></td><td></td><td></td><td></td></tr>
   <tr><th>6</th><td>상병수당 신청</td><td></td><td></td><td></td><td></td><td></td><td></td></tr>
   <tr class="short"><th>7</th><td>도어락 건전지 방전</td><td></td><td></td><td></td><td></td><td></td><td></td></tr>
   <tr class="short"><th>8</th><td>출산 축하금</td><td></td><td></td><td></td><td></td><td></td><td></td></tr>
   <tr><th>9</th><td>대우공무원수당</td><td></td><td></td><td></td><td></td><td></td><td></td></tr>
   <tr class="short"><th>10</th><td>동맥경화도 검사</td><td></td><td></td><td></td><td></td><td></td><td></td></tr>
   <tr><th>11</th><td>내집마련디딤돌대출 금리</td><td></td><td></td><td></td><td></td><td></td><td></td></tr>
   <tr><th>12</th><td>요기요 할인</td><td></td><td></td><td></td><td></td><td></td><td></td></tr>
   <tr><th>13</th><td>장단기금리차</td><td></td><td></td><td></td><td></td><td></td><td></td></tr>
   <tr><th>14</th><td>윈도우10 최적화</td><td></td><td></td><td></td><td></td><td></td><td></td></tr>
   <tr><th>15</th><td>희망두배</td><td></td><td></td><td></td><td></td><td></td><td></td></tr>
   <tr><th>16</th><td>태아보험 산모특약</td><td></td><td></td><td></td><td></td><td></td><td></td></tr>
   <tr><th>17</th><td>코로나 재확진 확률</td><td></td><td></td><td></td><td></td><td></td><td></td></tr>
   <tr><th>18</th><td>매실차 효능</td><td></td><td></td><td></td><td></td><td></td><td></td></tr>
   <tr><th>19</th><td>가족돌봄휴직</td><td></td><td></td><td></td><td></td><td></td><td></td></tr>
   <tr><th>20</th><td>국민연금 고갈</td><td></td><td></td><td></td><td></td><td></td><td></td></tr>
   <tr><th>21</th><td>송가인 결혼</td><td></td><td></td><td></td><td></td><td></td><td></td></tr>
   <tr><th>22</th><td>보험 환급금</td><td></td><td></td><td></td><td></td><td></td><td></td></tr>
  </table>
  </div>
  <div class="vscroll"><svg viewBox="0 0 14 10"><path d="M7 0L14 10H0Z" fill="#999"/></svg><i></i><svg class="down" viewBox="0 0 14 10"><path d="M0 0H14L7 10Z" fill="#999"/></svg></div>
 </div>

 <div class="sheetbar">
  <div class="nav"><svg viewBox="0 0 7 12"><path d="M7 0V12L0 6Z" fill="#999"/></svg><svg viewBox="0 0 7 12"><path d="M0 0V12L7 6Z" fill="#999"/></svg></div>
  <div class="stab">통합웹1번째</div>
  <div class="plus"><svg viewBox="0 0 22 22"><circle cx="11" cy="11" r="10" fill="none" stroke="#ddd" stroke-width="1.500"/><path d="M11 5.500V16.500M5.500 11H16.500" stroke="#ddd" stroke-width="2"/></svg></div>
  <span class="vdots"><i></i><i></i><i></i></span>
  <div class="hscroll"><svg viewBox="0 0 10 14"><path d="M10 0V14L0 7Z" fill="#999"/></svg><i></i><svg class="right" viewBox="0 0 10 14"><path d="M0 0V14L10 7Z" fill="#999"/></svg></div>
 </div>
 <footer class="status"><span class="ready">준비</span><svg class="acc" viewBox="0 0 22 22"><circle cx="9" cy="3.500" r="2.500" fill="none" stroke="#ddd" stroke-width="1.500"/><path d="M1 5L6 8V13L3 20L6 21L9 15L11 18M17 5L12 8V12M11 17L14 20L20 12" fill="none" stroke="#ddd" stroke-width="1.600"/></svg><span class="acct">접근성: 계속 진행 가능</span>
  <span class="view on-view"><svg viewBox="0 0 20 20"><path d="M1 1H19V19H1ZM7 1V19M13 1V19M1 7H19M1 13H19" fill="none" stroke="#ddd" stroke-width="1.800"/></svg></span>
  <span class="view"><svg viewBox="0 0 20 20"><path d="M1 1H19V19H1ZM5 4.500H15V15.500H5ZM7 8H13M7 11H13M7 13.500H13" fill="none" stroke="#ddd" stroke-width="1.600"/></svg></span>
  <span class="view"><svg viewBox="0 0 20 20"><path d="M1 19V1H19V19M1 19H19M12 1V12H1M7 1V9" fill="none" stroke="#ddd" stroke-width="1.700"/></svg></span>
  <svg class="zoomer" viewBox="0 0 190 20"><path d="M0 10H11" stroke="#ccc" stroke-width="1.500"/><path d="M15 10.500H163" stroke="#aaa" stroke-width="2"/><rect x="86" y="2" width="7" height="17" fill="#bbb"/><path d="M172 10H183M177.500 4.500V15.500" stroke="#ccc" stroke-width="1.500"/></svg><span class="pct">100%</span>
 </footer>
</section>

<section class="poster">
 <header class="p-title"><svg class="p-ico"><use href="#cube"/></svg><span>[NAVER 키워드 자동 포스팅] - Premium_naver_V2.143.exe</span>
  <svg class="pc1" viewBox="0 0 16 16"><path d="M0 8H16" stroke="#222" stroke-width="1.300"/></svg><svg class="pc2" viewBox="0 0 16 16"><rect x="1" y="1" width="14" height="14" rx="1.500" fill="none" stroke="#c4c4c4" stroke-width="1.400"/></svg><svg class="pc3" viewBox="0 0 16 16"><path d="M.5 .5L15.500 15.500M15.500 .5L.5 15.500" stroke="#222" stroke-width="1.400"/></svg></header>
 <aside class="rail"><i></i></aside>
 <div class="p-body">
  <div class="opts">
   <div class="left">
    <div class="line l1"><span class="w209">ID 모두 동작 후 쉬는 시간</span><i class="fld f13"></i><span>분</span></div>
    <div class="line l2"><span class="w125">ID 당 발행 개수</span><i class="fld f7"></i><span class="w23">개</span><span class="w28">/<span class="cutd">D</span></span><span class="w122">끼리 발행 간격</span><i class="fld f9"></i><span>분</span></div>
    <div class="subs">
     <label><i class="cb"><svg><use href="#tick"/></svg></i><span>첫번째 소제목</span></label><label><i class="cb"><svg><use href="#tick"/></svg></i><span class="cut">네번째 소제목</span></label>
     <label><i class="cb"><svg><use href="#tick"/></svg></i><span>두번째 소제목</span></label><label><i class="cb"></i><span class="cut">다섯번째 소제목</span></label>
     <label><i class="cb"><svg><use href="#tick"/></svg></i><span>세번째 소제목</span></label><label><i class="cb"></i><span class="cut">여섯번째 소제목</span></label>
    </div>
    <div class="rule3"><i></i><i></i><i></i></div>
    <div class="imgs"><label class="half"><i class="cb"></i><span>모든 이미지 노출x</span></label><label><i class="cb"></i><span>대표 이미지만 노출o</span></label></div>
    <div class="imgs second"><label class="onbox"><i class="cb"><svg><use href="#tick"/></svg></i><span>모든 이미지 노출o</span></label></div>
   </div>
   <div class="mid">
    <div class="m3 big1"><label><i class="cb"><svg><use href="#tick"/></svg></i><span>글변환 사용</span></label><label class="lg"><i class="cb"><svg><use href="#tick"/></svg></i><span class="clip67">임시저장</span></label><label class="pp"><i class="cb"></i><span>P변경</span></label></div>
    <div class="m3"><label><i class="cb"></i><span>글변환 사용</span></label><label class="lg"><i class="cb"></i><span>공개</span></label><label class="pp"><i class="cb"></i><span>제목 변환</span></label></div>
    <div class="m2 memo"><label><i class="cb"></i><span class="cut w99">메모장 저장(.txt)</span></label><label><i class="cb"></i><span class="cut">메모장 저장(.html)</span></label></div>
    <div class="m2 ai"><label><i class="cb"></i><span class="cut w128">이미지 삽입 하기</span></label><label class="a1x"><i class="cb"></i><span class="cut">AI 생성 이미지(API)</span></label></div>
    <div class="m2 ai"><label><i class="cb"></i><span class="w128">고정 이미지 삽입</span></label><label class="a2x"><i class="cb"><svg><use href="#tick"/></svg></i><span class="cut">AI 사이트 이미지 뽑기</span></label></div>
    <div class="m2 fix"><label><i class="cb"></i><span>고정이미지+합성</span></label></div>
   </div>
  </div>
  <div class="side">
   <button class="go">발행 시작</button>
   <div class="cliprow">엑셀 발행 순서</div>
   <div class="entry">1</div>
   <button class="b3"><span>엑셀 다시 불러오기</span></button>
   <button class="b3 b4"><span>IP 변경 테스트</span></button>
   <div class="teth"><i class="cb"></i><span>테더링</span><i class="cb"></i><b>AltQ</b></div>
   <button class="b3 b5"><span>수동</span></button>
   <div class="entry e5"></div>
   <button class="b3 b6"><span>사전 작업Auto</span></button>
   <button class="b3 b7"><span>폴더 열기</span></button>
  </div>
  <div class="log">
   <div class="logbox"><p>최신 크롬 버전 :: 136<br>내 드라이버 버전 :: 136<br>naver 추가 구매 요청드립니다.<br>드라이버/크롬 체크...<br>내 크롬 버전 :: 136<br>최신 크롬 버전 :: 136<br>내 드라이버 버전 :: 136<br>naver 추가 구매 요청드립니다.<br>드라이버/크롬 체크...<br>내 크롬 버전 :: 136<br>최신 크롬 버전 :: 136<br>내 드라이버 버전 :: 136<br>서버1 선택<br>엑셀 읽어오기 성공 개수: 3844개</p></div>
   <button class="b3 savelog"><span>로그저장</span></button>
  </div>
  <div class="creds">
   <div class="cred"><span>ID</span><b>dmbpd</b></div>
   <div class="cred"><span>PW</span><b class="stars">**************</b></div>
   <div class="sel s1">GPT-4o<svg viewBox="0 0 12 8"><path d="M1 1L6 7L11 1" fill="none" stroke="#555" stroke-width="1.300"/></svg></div>
   <div class="sel">백링크 위<svg viewBox="0 0 12 8"><path d="M1 1L6 7L11 1" fill="none" stroke="#555" stroke-width="1.300"/></svg></div>
  </div>
  <div class="news"><p>-&gt; 바드 이미<br>지 수집 업데이<br>트<br><br>&lt;&lt;2월 3일 공<br>지사항&gt;&gt;</p><div class="sb"><i></i></div></div>
  <div class="srv">
   <div class="dl"><svg viewBox="0 0 17 16"><path d="M1 15V7L7 1L9 2L7 6H15V8.500H10V11H12V13H10V15M1 15H10" fill="none" stroke="#f00" stroke-width="1.300"/></svg><a>프로그램 다운로드 하기</a></div>
   <div class="tree"><span>순서</span><span>아이디</span><span>상태</span></div>
   <div class="radios"><i class="picked"></i><span>서버 1</span><i></i><span>서버 2</span></div>
  </div>
 </div>
</section>

<footer class="taskbar">
 <div class="widget"><svg viewBox="0 0 28 42"><rect x="0" y="10" width="13" height="32" rx="2" fill="#1d428a"/><path d="M7 10H11Q13 10 13 12V40Q13 42 11 42H9L10 30L6 22L8 17Z" fill="#c8102e"/><path d="M6 15L9 20L8 26L11 32L9 42H7V32L3 28Z" fill="#fff"/><circle cx="16" cy="12" r="12" fill="#ff99a4"/><text x="12" y="18" class="badge">4</text></svg><p>스포츠 헤드라인<br><span>커리는 2차전도...</span></p></div>
 <svg class="win" viewBox="0 0 36 36"><path d="M0 0H17V17H0ZM19 0H36V17H19ZM0 19H17V36H0ZM19 19H36V36H19Z" fill="url(#gWin)"/></svg>
 <div class="tsearch"><svg viewBox="0 0 24 24"><circle cx="10" cy="10" r="8" fill="none" stroke="#e2e2e2" stroke-width="2.600"/><path d="M16 16L22 22" stroke="#e2e2e2" stroke-width="3"/></svg><span>검색</span><svg class="flower" viewBox="0 0 44 38"><path d="M16 20L38 38M28 20L36 37M30 24L43 32" stroke="#5aa832" stroke-width="3.500"/><g stroke="#f4f4fa" stroke-width="3"><path d="M18 0V17M9 5L27 13M9 13L27 5M13 1L23 17M23 1L13 17"/></g><circle cx="18" cy="9" r="3" fill="#f4c020"/><g stroke="#f4b81e" stroke-width="3"><path d="M6 11V25M0 14L13 22M0 22L13 14"/></g><circle cx="6" cy="18" r="2.500" fill="#8a5a10"/><circle cx="6" cy="27" r="4.500" fill="#f0642d"/><circle cx="29" cy="4" r="4" fill="#f47a50"/><path d="M25 12L28 8L32 12L36 8L41 12Q42 22 33 24Q25 22 25 12Z" fill="#f8c545"/><path d="M10 25Q14 17 20 21Q26 26 20 34Q12 38 10 32Z" fill="#b48cf0"/></svg></div>
 <div class="apps">
  <span><svg viewBox="0 0 36 36"><rect x="0" y="11" width="26" height="24" rx="2" fill="#6b6b6b"/><rect x="9" y="2" width="27" height="24" rx="2" fill="#f4f4f4"/><path d="M9 11H26V26H11Q9 26 9 24Z" fill="#bcbcbc"/></svg></span>
  <span class="run"><svg viewBox="0 0 36 36"><use href="#chrome"/></svg><em>m</em></span>
  <span><svg viewBox="0 0 36 36"><ellipse cx="14" cy="15" rx="13" ry="12" fill="#2bd366"/><circle cx="9" cy="12" r="1.800" fill="#145c30"/><circle cx="18" cy="12" r="1.800" fill="#145c30"/><ellipse cx="25" cy="23" rx="10.500" ry="9.500" fill="#ececec"/><path d="M28 31L33 33L32 28Z" fill="#ececec"/><circle cx="21.500" cy="21" r="1.500" fill="#777"/><circle cx="28.500" cy="21" r="1.500" fill="#777"/></svg></span>
  <span><svg viewBox="0 0 36 36"><rect width="36" height="36" rx="4" fill="#fbe300"/><ellipse cx="18" cy="17" rx="14" ry="11" fill="#3b1c1c"/><path d="M11 25L11 32L18 27Z" fill="#3b1c1c"/><text x="18" y="20.500" class="talk">TALK</text></svg></span>
  <span><svg viewBox="0 0 36 36"><circle cx="22" cy="14" r="11" fill="none" stroke="#f97a0c" stroke-width="5"/><path d="M14 22L3 33" stroke="#f97a0c" stroke-width="5"/></svg></span>
  <span><svg viewBox="0 0 36 36"><circle cx="18" cy="18" r="17.500" fill="#f5d415"/><path d="M14 10L26 18L14 26Z" fill="#fff"/></svg></span>
  <span><svg viewBox="0 0 36 36"><path d="M11 3H23Q27 4 28 9L22 10Q19 11 18 15L14 25H5Q0 24 2 18L6 7Q7 4 11 3Z" fill="url(#gCopA)"/><path d="M25 10H31Q36 11 34 18L29 29Q27 33 24 33H13Q9 32 8 26L14 26Q17 25 18 21L21 13Q22 10 25 10Z" fill="url(#gCopB)"/></svg></span>
  <span><svg viewBox="0 0 36 36"><path d="M11 5H16V31L11 31.500Z M20 5H25V31.500L20 31Z" fill="#b20710"/><path d="M11 5H16L25 31.500L20 31Z" fill="#e50914"/></svg></span>
  <span class="run"><svg viewBox="0 0 36 36"><path d="M0 4Q0 2 2 2H13L16 5V9H0Z" fill="#e8a210"/><rect y="5" width="36" height="30" rx="2" fill="url(#gFold)"/><path d="M6 35V27Q6 24 9 24H27Q30 24 30 27V35Z" fill="#1182d8"/><path d="M12 29H24" stroke="#0a4f90" stroke-width="2"/></svg></span>
  <span><svg viewBox="0 0 36 36"><path d="M9 9V2H27V9" fill="none" stroke="#2aa9e0" stroke-width="2.500"/><rect x="1" y="5" width="34" height="31" rx="4" fill="#f2f2f2"/><path d="M10 13H17V20H10Z" fill="#f25022"/><path d="M18.500 13H25.500V20H18.500Z" fill="#7fba00"/><path d="M10 21H17V28H10Z" fill="#00a4ef"/><path d="M18.500 21H25.500V28H18.500Z" fill="#ffb900"/></svg></span>
  <span><svg viewBox="0 0 36 36"><path d="M18 2L33 11V25L18 34L3 25V11Z" fill="#5a6068"/><path d="M18 2L3 11V25L18 11Z" fill="#8b9299"/><path d="M18 9L26 25L18 21L10 25Z" fill="#23272c"/><path d="M18 2L33 11L18 9Z" fill="#aab0b6"/></svg></span>
  <span><svg viewBox="0 0 36 36"><rect width="36" height="36" fill="url(#gMa)"/><path d="M4 27L13 9H18L9 27ZM14 27L23 9H28V27H24V18L19 27Z" fill="#fff"/></svg></span>
  <span><svg viewBox="0 0 36 36"><path d="M9 12L22 3L35 12V30Q35 33 32 33H13Q9 33 9 30Z" fill="#1490df"/><path d="M16 15L27 6L35 12L20 24Z" fill="#0a5ba8"/><path d="M13 33L35 17V30Q35 33 32 33Z" fill="#50c9f5"/><rect y="8" width="19" height="20" rx="2" fill="#0f6cbd"/><circle cx="9.500" cy="18" r="4.500" fill="none" stroke="#fff" stroke-width="2.500"/></svg></span>
  <span><svg viewBox="0 0 36 36"><g fill="none" stroke="#f2f2f2" stroke-width="2.600"><path id="pt" d="M18 12L24 15.500V25Q24 31 18 33Q12 34 9 30"/><use href="#pt" transform="rotate(60 18 18)"/><use href="#pt" transform="rotate(120 18 18)"/><use href="#pt" transform="rotate(180 18 18)"/><use href="#pt" transform="rotate(240 18 18)"/><use href="#pt" transform="rotate(300 18 18)"/></g></svg></span>
  <span><svg viewBox="0 0 36 36"><path d="M26 1L35 5V31L26 35L10 20L4 25L0 23V21L5 18L0 15V13L4 11L10 16ZM26 10L16 18L26 26Z" fill="#1a8ad6"/><path d="M26 1L35 5V31L26 35Z" fill="#33a9f2"/></svg></span>
  <span><svg viewBox="0 0 36 36"><use href="#crd" y="-2"/></svg></span>
  <span class="active"><svg viewBox="0 0 24 24"><use href="#cube"/></svg></span>
  <span class="run"><svg viewBox="0 0 36 36"><use href="#xl"/></svg></span>
 </div>
 <div class="tray">
  <svg class="ty-up" viewBox="0 0 16 10"><path d="M1 9L8 2L15 9" fill="none" stroke="#fff" stroke-width="1.700"/></svg>
  <svg class="ty-a" viewBox="0 0 20 24"><path d="M1 23L10 1L19 23M4.500 15H15.500" fill="none" stroke="#fff" stroke-width="1.600"/></svg>
  <span class="han">한</span>
  <svg class="ty-w" viewBox="0 0 24 18"><path d="M1 7Q12 -4 23 7M4.500 10.500Q12 3 19.500 10.500M8 14Q12 9.500 16 14" fill="none" stroke="#fff" stroke-width="1.900"/><circle cx="12" cy="16" r="1.900" fill="#fff"/></svg>
  <svg class="ty-v" viewBox="0 0 24 20"><path d="M1 7H5L10 2V18L5 13H1Z" fill="none" stroke="#fff" stroke-width="1.500"/><path d="M14 6L22 14M22 6L14 14" stroke="#fff" stroke-width="1.500"/></svg>
  <svg class="ty-b" viewBox="0 0 24 22"><rect x="2" y="6" width="18" height="13" rx="3" fill="none" stroke="#fff" stroke-width="1.600"/><rect x="5" y="9" width="12" height="7" fill="#fff"/><path d="M22 10V15" stroke="#fff" stroke-width="2"/><path d="M6 0L1 8H5L4 13L10 5H6Z" fill="#fff" stroke="#202020"/></svg>
  <p>오후 2:06<br>2025-05-08</p>
 </div>
</footer>
</main>
</body>
</html>
```
FILE: styles.css
```css
* { box-sizing: border-box; }
html, body { margin: 0; width: 2560px; height: 1600px; overflow: hidden; background: #000; }
body { font-family: "Open Sans", "Noto Sans CJK KR", sans-serif; font-size: 18px; font-weight: 350; color: #fff; }
.defs { position: absolute; }
svg { display: block; flex: none; overflow: visible; }
figure, p { margin: 0; }
button { font: inherit; padding: 0; margin: 0; }
.desktop { position: relative; width: 2560px; height: 1600px; overflow: hidden; }

/* desktop icons */
.icons { display: grid; grid-template-columns: repeat(19, 115px); grid-auto-rows: 147px; width: 2185px; margin-left: -1px; }
.icons figure { display: flex; flex-direction: column; align-items: center; padding-top: 7px; }
.icons figure > svg { width: 72px; height: 72px; }
.icons figcaption { margin-top: 5px; font-size: 17px; line-height: 25px; text-align: center; white-space: nowrap; text-shadow: 0 1px 2px #000; }
.icons .ko { font-size: 18px; }
.r2, .r3, .r4, .r5, .r6 { grid-column: 1; }
.adobe { font: 700 17px "Open Sans"; }
.ps { fill: #31a8ff; }
.ae { fill: #9f9bff; }
.ziptext { font: 800 16px "Open Sans"; fill: #fff; }

/* spreadsheet window */
.excel { position: absolute; left: 904px; top: 227px; width: 1625px; height: 1168px; background: #0a0a0a; border: 2px solid #555; border-radius: 13px; overflow: hidden; display: flex; flex-direction: column; isolation: isolate; }
.chev { width: 10px; height: 7px; color: #fff; }
.xl-title { height: 70px; display: flex; align-items: center; padding-left: 22px; color: #666; }
.xl-title > * { flex: none; }
.xl-title .chev { color: #666; }
.xl-logo { width: 25px; height: 24px; }
.q-save { width: 24px; height: 24px; margin-left: 23px; }
.q-undo { width: 24px; height: 24px; margin-left: 18px; margin-right: 8px; }
.q-redo { width: 24px; height: 24px; margin-left: 15px; margin-right: 8px; }
.q-more { width: 12px; height: 12px; margin-left: 22px; }
.xl-name { width: 334px; margin-left: 24px; font-size: 17px; letter-spacing: .2px; white-space: nowrap; }
.xl-search { width: 437px; height: 48px; background: #141414; border: 1px solid #242424; border-radius: 6px; display: flex; align-items: center; gap: 20px; padding-left: 20px; font-size: 21px; margin-right: 310px; }
.xl-search svg { width: 22px; height: 22px; }
.avatar { width: 36px; height: 36px; border-radius: 50%; background: #05604f; color: #fff; font-size: 15px; line-height: 36px; text-align: center; margin-right: 46px; }
.wc { width: 16px; height: 16px; margin-right: 56px; }

.tabs { height: 46px; display: flex; align-items: center; padding-left: 26px; font-size: 21px; letter-spacing: .2px; white-space: nowrap; }
.tabs > span { flex: none; }
.t1 { width: 74px; }
.t2 { width: 47px; font-weight: 700; align-self: stretch; line-height: 48px; background: linear-gradient(#5fbf85, #5fbf85) 0 41px / 20px 3px no-repeat; }
.t3 { width: 67px; } .t4 { width: 174px; } .t5 { width: 67px; } .t6 { width: 87px; } .t7 { width: 67px; } .t8 { width: 66px; } .t9 { width: 90px; }
.t10 { width: 743px; font-weight: 600; font-size: 18px; letter-spacing: -.1px; }
.share { width: 94px; height: 36px; background: #36a55f; border-radius: 6px; color: #0a0a0a; display: flex; align-items: center; gap: 8px; padding-left: 7px; margin-top: 2px; font-size: 20px; }
.share svg { width: 18px; height: 18px; }
.share .chev { width: 10px; height: 7px; color: #0a0a0a; }

.ribbon { margin: 0 13px 0 11px; height: 152px; background: #292929; border-radius: 12px; display: flex; font-size: 19.500px; }
.group { display: grid; grid-template-rows: 39px 39px 39px 27px; padding-top: 4px; flex: none; background: linear-gradient(#555, #555) right 7px / 1px 136px no-repeat; }
.rr { display: flex; align-items: center; white-space: nowrap; }
.i24 { width: 24px; height: 24px; }
.glabel { display: grid; grid-template-columns: 1fr 23px; align-items: center; justify-items: center; white-space: nowrap; grid-column: 1 / -1; font-size: 19px; }
.glabel.one { grid-template-columns: 1fr; }
.glabel svg { width: 13px; height: 13px; margin-top: 6px; }
.g-clip { width: 172px; grid-template-columns: 106px 66px; }
.paste { grid-row: 1 / 4; display: flex; flex-direction: column; align-items: center; padding: 9px 0 0 12px; color: #5c5c5c; font-size: 19px; }
.paste svg { width: 42px; height: 46px; }
.paste span { line-height: 26px; margin-top: 3px; }
.paste .chev { width: 10px; height: 7px; color: #5c5c5c; margin-top: 8px; }
.g-clip .rr { gap: 11px; }
.g-font { width: 273px; }
.g-font .rr:first-child { padding-left: 12px; gap: 4px; }
.combo { height: 36px; border: 1px solid #888; border-radius: 6px; display: flex; align-items: center; justify-content: space-between; padding: 0 4px; }
.c-font { width: 182px; }
.c-size { width: 63px; font-size: 18px; }
.c-num { width: 135px; margin-left: 13px; }
.f2 { display: grid; padding-left: 11px; grid-template-columns: 38px 38px 40px 18px 12px 28px 56px; justify-items: center; color: #ccc; font-size: 17px; }
.f2 i { font-style: normal; transform: skewX(-12deg); }
.f2 u { text-underline-offset: 4px; }
.f2 s, .f3 s { width: 1px; height: 36px; background: #555; }
.grow { display: flex; font-size: 19px; line-height: 26px; }
.grow svg { width: 10px; height: 7px; margin-left: 1px; }
.grow.sm { font-size: 17px; }
.f3 { display: grid; padding-left: 11px; grid-template-columns: 36px 22px 8px 36px 20px 46px 10px 22px 18px 40px; justify-items: center; }
.fcol { border-bottom: 6px solid #f00; width: 24px; height: 24px; line-height: 16px; text-align: center; font-size: 18px; color: #ccc; }
.hanja { font-size: 13px; line-height: 12px; text-align: right; color: #ccc; }
.hanja em { font-style: normal; color: #2f93e0; }
.g-align { width: 200px; }
.a1 { display: grid; padding-left: 12px; grid-template-columns: 36px 42px 36px 42px 14px; justify-items: center; }
.on { width: 36px; height: 36px; border: 1px solid #aaa; border-radius: 6px; background: #333; display: grid; place-items: center; }
.wrap { font-size: 12.500px; line-height: 12px; color: #ccc; width: 26px; }
.wrap svg { display: inline-block; width: 12px; height: 12px; vertical-align: -3px; }
.a3 { display: grid; padding-left: 12px; grid-template-columns: 36px 42px 44px 6px; justify-items: center; }
.orient { width: 44px; height: 36px; border-left: 1px solid #555; display: grid; place-items: center; }
.g-num { width: 160px; }
.n2 { display: grid; padding-left: 13px; grid-template-columns: 36px 20px 46px 34px; justify-items: center; }
.n3 { display: grid; padding-left: 13px; grid-template-columns: 36px 42px; justify-items: center; }
.dec { font-size: 13px; line-height: 12px; text-align: right; color: #ccc; letter-spacing: -.5px; }
.dec svg { display: inline-block; width: 12px; height: 10px; }
.g-style { width: 188px; }
.g-style .rr { padding-left: 19px; gap: 7px; }
.g-cell { width: 133px; }
.g-cell .rr { padding-left: 18px; gap: 7px; }
.g-cell .rr .chev { margin-left: 10px; }
.g-cell .r-fmt .chev { margin-left: 0; }
.g-edit { width: 147px; }
.e1 { display: grid; padding-left: 12px; grid-template-columns: 34px 24px 46px 4px; justify-items: center; }
.e2 { display: grid; padding-left: 12px; grid-template-columns: 36px 16px 62px 1px; justify-items: center; }
.big { display: flex; flex-direction: column; align-items: center; padding-top: 13px; }
.big > svg { width: 42px; height: 42px; }
.big p { line-height: 25px; text-align: center; margin-top: 5px; font-size: 19px; height: 63px; white-space: nowrap; }
.big .glabel { height: 22px; }
.g-pdf .glabel { font-size: 18px; }
.g-add { width: 86px; }
.g-pdf { width: 133px; }
.collapse { width: 16px; height: 10px; margin: 131px 0 0 73px; }

.fbar { height: 40px; margin-top: 12px; display: flex; padding: 0 11px; flex: none; }
.namebox { width: 151px; height: 40px; background: #292929; border: 1px solid #555; border-radius: 7px; }
.vdots { display: flex; flex-direction: column; align-items: center; justify-content: center; gap: 3px; width: 31px; }
.vdots i { width: 3px; height: 4px; background: #bbb; }
.fxbox { width: 109px; height: 40px; background: #292929; border: 1px solid #555; border-radius: 7px; display: flex; align-items: center; gap: 15px; padding-left: 8px; }
.fxbox svg { width: 19px; height: 18px; }
.fxbox svg + svg { width: 24px; }
.fxbox em { font: italic 26px "Liberation Serif", serif; color: #ddd; margin-left: -1px; }
.formula { width: 1300px; height: 40px; margin-left: 7px; background: #292929; border: 1px solid #555; border-radius: 7px; display: flex; align-items: center; justify-content: space-between; padding: 0 8px 0 16px; font-size: 22px; letter-spacing: .45px; }
.formula svg { width: 14px; height: 9px; }

.sheet { margin-top: 10px; height: 767px; display: flex; flex: none; border-bottom: 1px solid #888; }
.cells { width: 1591px; overflow: hidden; border-right: 1px solid #777; }
table { border-collapse: collapse; table-layout: fixed; width: 1752px; }
.col-n { width: 46px; } .col-a { width: 536px; } .col-b { width: 134px; } .col-c { width: 153px; } .col-d { width: 171px; } .col-e { width: 199px; } .col-f { width: 159px; } .col-g { width: 354px; }
th, td { padding: 0; text-align: center; white-space: nowrap; overflow: hidden; line-height: 26px; }
th { background: #0a0a0a; color: #ccc; font-weight: 350; font-size: 19px; border: solid #555; border-width: 0 1px 1px 0; padding-top: 3px; }
tr { height: 34px; }
tr.cols { height: 33px; }
.cols th { border-bottom: 2px solid #888; font-size: 19px; padding: 0; }
tr.short { height: 33px; }
td { background: #fff; color: #000; border: 1px solid #000; font-size: 22px; letter-spacing: 1.200px; padding-bottom: 2px; }
.head td { background: #00b050; font-weight: 700; }
.head .gold { background: #ffc000; }
.head .red { background: #f00; }
.over { display: flex; justify-content: center; overflow: hidden; font-size: 21.500px; letter-spacing: .1px; }
.vscroll { width: 28px; display: flex; flex-direction: column; align-items: center; padding: 8px 0 5px; background: #141414; border-radius: 14px; }
.vscroll svg { width: 14px; height: 10px; }
.vscroll i { width: 13px; height: 26px; border-radius: 7px; background: #999; margin-top: 8px; }
.vscroll .down { margin-top: auto; }

.sheetbar { height: 34px; display: flex; align-items: center; padding-left: 15px; flex: none; }
.nav { width: 102px; height: 34px; background: #202020; display: flex; align-items: center; gap: 26px; padding-left: 14px; }
.nav svg { width: 7px; height: 12px; }
.stab { width: 136px; height: 31px; align-self: flex-start; background: #fff; border-bottom: 3px solid #217346; color: #217346; font-size: 20.500px; font-weight: 400; line-height: 26px; text-align: center; letter-spacing: .2px; }
.plus { width: 68px; height: 34px; background: #202020; display: grid; place-items: center; padding-left: 30px; }
.plus svg { width: 22px; height: 22px; }
.sheetbar .vdots { width: 12px; margin-left: 644px; }
.hscroll { width: 606px; height: 26px; margin-left: 11px; border-radius: 13px; background: #141414; display: flex; align-items: center; padding: 0 8px; }
.hscroll svg { width: 10px; height: 14px; }
.hscroll i { width: 317px; height: 12px; background: #999; border-radius: 6px; margin-left: 8px; }
.hscroll .right { margin-left: auto; }
.status { flex: 1; background: #141414; border-top: 1px solid #444; display: flex; align-items: center; padding-left: 15px; font-size: 18.500px; white-space: nowrap; }
.status > * { flex: none; }
.ready { width: 63px; }
.acc { width: 22px; height: 22px; }
.acct { margin-left: 6px; width: 1048px; }
.view { width: 60px; height: 100%; display: grid; place-items: center; }
.on-view { background: #262626; }
.view svg { width: 20px; height: 20px; }
.zoomer { width: 190px; height: 20px; margin-left: 13px; }
.pct { margin-left: 11px; font-size: 17.500px; letter-spacing: -.2px; }

/* posting tool window */
.poster { position: absolute; left: 158px; top: 490px; width: 902px; height: 594px; background: #f0f0f0; border: 1px solid #999; border-radius: 13px; overflow: hidden; box-shadow: 0 34px 62px rgba(0,0,0,.42), 0 0 3px #555; color: #000; display: grid; grid-template: 43px 1fr / 43px 1fr; font-family: "Noto Sans CJK KR", sans-serif; font-weight: 300; white-space: nowrap; isolation: isolate; }
.p-title { grid-column: 1 / -1; background: #f3f3f3; display: flex; align-items: center; padding-left: 11px; font: 400 18.500px "Open Sans", "Noto Sans CJK KR", sans-serif; letter-spacing: -.4px; border-bottom: 1px solid #e2e2e2; }
.p-ico { width: 24px; height: 24px; margin-right: 6px; }
.p-title span { width: 685px; flex: none; margin-top: -1px; }
.pc1, .pc2, .pc3 { width: 16px; height: 16px; }
.pc2 { margin-left: 52px; }
.pc3 { margin-left: 55px; }
.rail { border-right: 2px solid #e4e4e4; width: 34px; }
.rail i { display: block; height: 59px; background: #f9f9f9; }
.p-body { display: grid; grid-template-columns: 455px 13px 179px 83px 127px; grid-template-rows: 200px 116px 233px; }
.opts { grid-area: 1 / 1 / 2 / 5; display: flex; position: relative; z-index: 1; }
.left { width: 395px; font-size: 19px; letter-spacing: .5px; flex: none; }
.mid { width: 335px; font-size: 19px; letter-spacing: .5px; flex: none; }
.line { display: flex; align-items: center; line-height: 24px; }
.line span { flex: none; overflow: hidden; }
.line > span:first-child { padding-left: 3px; }
.l1 { height: 26px; margin-top: 8px; }
.l2 { height: 30px; margin: 3px 15px 3px 0; }
.w209 { width: 212px; } .f13 { width: 13px; margin-right: 9px; } .w125 { width: 128px; } .f7 { width: 7px; margin-right: 8px; } .w23 { width: 23px; } .w28 { width: 28px; } .w122 { width: 122px; } .f9 { width: 9px; margin-right: 9px; }
.w99 { width: 99px; } .w128 { width: 128px; }
.fld { height: 24px; background: #fff; border-top: 1px solid #999; flex: none; }
.cutd { display: inline-block; text-indent: -7px; vertical-align: bottom; }
.cb { flex: none; width: 12px; height: 12px; background: #fff; border: 1px solid #fff; border-top-color: #777; border-left-color: #777; display: block; }
.cb svg { width: 12px; height: 12px; margin: -1px; }
label { display: flex; align-items: center; }
label span { overflow: hidden; }
.subs { border-top: 1px solid #999; padding: 12px 0 0 10px; display: grid; grid-template-columns: 170px 1fr; grid-auto-rows: 20px; width: 395px; }
.subs span { margin: -5px 0 0 14px; line-height: 20px; font-size: 19px; }
.cut { text-indent: -2px; }
.rule3 { display: flex; height: 1px; margin-top: 2px; }
.rule3 i { height: 1px; background: #999; width: 5px; margin-right: 30px; }
.rule3 i + i { width: 140px; }
.rule3 i + i + i { width: 174px; margin: 0; }
.imgs { display: flex; padding-left: 5px; margin-top: 5px; height: 28px; font-size: 20px; letter-spacing: 1px; }
.imgs label { padding-left: 5px; background: #f0f0f0; }
.imgs span { margin-left: 10px; }
.second { margin-top: 0; }
.half { width: 170px; overflow: hidden; }
.half span { width: 143px; }
.onbox { width: 196px; height: 30px; padding-bottom: 4px; }
.m3, .m2 { display: flex; height: 30px; }
.m3 label { width: 120px; height: 26px; flex: none; }
.m3 span { margin: -5px 0 0 7px; }
.big1 { margin-top: 12px; }
.m3 .lg { width: 95px; }
.m3 .lg span { margin: -1px 0 0 11px; font-size: 20px; }
.m3 .pp { width: 115px; }
.m3 .pp span { margin-left: 14px; }
.clip67 { width: 67px; }
.m3 + .m3 { height: 28px; }
.m2 label { height: 30px; width: 130px; overflow: hidden; flex: none; padding-top: 9px; }
.m2 span { margin: -6px 0 0 14px; line-height: 24px; flex: none; }
.memo { border-top: 1px solid #999; height: 31px; }
.memo label { height: 28px; padding-top: 8px; }
.memo label + label { width: 185px; }
.memo, .fix { background: linear-gradient(#999, #999) 15px 100% / 300px 1px no-repeat; width: 315px; }
.fix { background-position: 26px 100%; background-size: 289px 1px; }
.m2.ai label { width: 160px; padding-top: 8px; background: #f0f0f0; }
.m2.ai .a1x { width: 183px; letter-spacing: .3px; }
.m2.ai .a2x { width: 204px; letter-spacing: .5px; }
.m2.fix label { width: 200px; }

.side { grid-area: 1 / 4 / 3 / 6; margin-left: 83px; padding-top: 5px; display: flex; flex-direction: column; font-size: 19px; }
.side > * { width: 99px; flex: none; }
.go { height: 29px; background: #00f; color: #fff; border: 2px solid; border-color: #5c5cff #000060 #000060 #5c5cff; font-size: 21.500px; line-height: 22px; }
.cliprow { height: 20px; line-height: 20px; display: flex; justify-content: center; overflow: hidden; font-size: 18.500px; }
.entry { height: 25px; background: #fff; border: solid #999; border-width: 1px 0 0 1px; text-align: center; line-height: 23px; }
.b3 { height: 25px; margin-top: 5px; background: #f0f0f0; border: 2px solid; border-color: #fff #777 #777 #fff; display: flex; justify-content: center; align-items: center; overflow: hidden; font-size: 18.500px; font-weight: 300; color: #000; line-height: 18px; }
.b3 span { flex: none; margin-top: -2px; }
.b4 { margin-top: 3px; }
.teth { display: flex; align-items: center; height: 31px; padding: 8px 0 0 5px; }
.side .teth { width: 125px; }
.teth span { width: 36px; margin: -4px 3px 0 10px; overflow: hidden; text-indent: -3px; }
.teth b { font-weight: 300; margin: -4px 0 0 7px; font-size: 17px; letter-spacing: -.8px; }
.b5 { margin-top: 0; }
.e5 { margin-top: 3px; }
.b6 { margin-top: 9px; letter-spacing: -.7px; }

.log { grid-area: 2 / 1 / 4 / 2; display: flex; flex-direction: column; align-items: flex-end; }
.logbox { width: 455px; height: 300px; border: 2px solid #000; background: #fff; overflow: hidden; font-size: 20px; line-height: 20.050px; padding: 0 2px; letter-spacing: .45px; word-spacing: 3px; }
.logbox p { margin-top: -7px; }
.savelog { width: 45px; margin-top: 1px; }
.creds { grid-area: 2 / 3 / 3 / 5; font-size: 18.500px; }
.cred { display: flex; height: 21px; line-height: 22px; }
.cred span { width: 22px; overflow: hidden; text-align: right; letter-spacing: -.5px; }
.cred b { width: 224px; background: #16d63c; border: solid #0b8a24; border-width: 1px 0 0 1px; text-align: center; font-weight: 300; font-size: 20px; overflow: hidden; line-height: 20px; }
.cred + .cred { height: 22px; }
.cred .stars { letter-spacing: 1.700px; line-height: 27px; }
.sel { width: 99px; height: 20px; margin: 20px 0 0 2px; background: #fff; border: 1px solid #888; border-radius: 2px; display: flex; align-items: center; justify-content: space-between; padding: 0 6px 0 2px; font-size: 17px; line-height: 17px; }
.s1 { margin-top: 17px; }
.sel svg { width: 12px; height: 8px; }
.news { grid-area: 3 / 3 / 4 / 4; margin: 19px 0 0 2px; width: 170px; height: 165px; border: 2px solid #000; background: #fff; display: flex; font-size: 20px; line-height: 20.150px; letter-spacing: .9px; }
.news p { width: 140px; padding: 21px 0 0 2px; overflow: hidden; }
.sb { width: 26px; background: #f0f0f0; padding: 26px 0 0 7px; }
.sb i { display: block; width: 11px; height: 26px; background: #888; }
.srv { grid-area: 3 / 4 / 4 / 6; }
.dl { display: flex; align-items: center; height: 18px; padding: 2px 0 0 38px; font-size: 16px; font-weight: 700; color: #800080; }
.dl svg { width: 17px; height: 16px; margin-right: 7px; }
.dl a { text-decoration: underline; letter-spacing: -.8px; text-underline-offset: 3px; }
.tree { width: 180px; height: 165px; border: 1px solid #82879a; background: #fff; display: grid; grid-template-columns: 33px 113px 32px; grid-template-rows: 26px; font-family: "Open Sans", "Noto Sans CJK KR"; font-weight: 350; font-size: 19px; }
.tree span { border-right: 1px solid #ddd; overflow: hidden; line-height: 26px; padding-left: 4px; }
.tree span:nth-child(2) { text-align: center; padding: 0; }
.radios { display: flex; align-items: center; height: 30px; padding-left: 12px; font-size: 20px; gap: 9px; letter-spacing: .5px; }
.radios i { flex: none; width: 12px; height: 12px; border-radius: 50%; background: #fff; border: 1px solid #999; border-right-color: #ddd; border-bottom-color: #ddd; }
.radios .picked { background: radial-gradient(#000 2px, #fff 3px); }
.radios span + i { margin-left: 8px; }

/* taskbar */
.taskbar { position: absolute; left: 0; top: 1528px; width: 2560px; height: 72px; background: #202020; border-top: 2px solid #3b3b3b; display: flex; align-items: center; }
.widget { width: 440px; margin-left: 40px; display: flex; align-items: center; }
.widget svg { width: 28px; height: 42px; margin-top: -4px; }
.widget p { margin: -4px 0 0 8px; font-size: 18.800px; line-height: 24px; letter-spacing: .2px; }
.widget p span { color: #bbb; font-size: 18.500px; }
.badge { font: 17px "Open Sans"; fill: #111; }
.win { width: 36px; height: 36px; }
.tsearch { width: 328px; height: 48px; margin-left: 20px; background: #404040; border: 1px solid #565656; border-radius: 24px; display: flex; align-items: center; font-size: 21px; color: #ddd; padding-left: 16px; }
.tsearch svg { width: 23px; height: 23px; margin-right: 16px; }
.tsearch .flower { width: 44px; height: 38px; margin: 0 21px 0 auto; }
.apps { display: grid; grid-template-columns: repeat(18, 66px); margin-left: 4px; height: 70px; }
.apps span { display: grid; place-items: center; position: relative; }
.apps svg { width: 36px; height: 36px; margin-top: -2px; }
.talk { font: 800 9.500px "Open Sans"; fill: #fbe300; text-anchor: middle; }
.apps em { position: absolute; left: 38px; top: 7px; width: 24px; height: 24px; border-radius: 50%; background: #0b57a0; font: 15px/22px "Open Sans"; text-align: center; }
.run::after { content: ""; position: absolute; left: 28px; bottom: 7px; width: 9px; height: 5px; border-radius: 3px; background: #999; }
.active::before { content: ""; position: absolute; left: 3px; top: 4px; width: 60px; height: 60px; border-radius: 7px; background: #333; }
.active svg { position: relative; }
.active::after { content: ""; position: absolute; left: 21px; bottom: 7px; width: 24px; height: 5px; border-radius: 3px; background: #4cc2ff; }
.tray { flex: 1; display: flex; align-items: center; padding-right: 28px; padding-left: 101px; }
.ty-up { width: 16px; height: 10px; }
.ty-a { width: 18px; height: 24px; margin-left: 31px; }
.han { font-size: 23px; margin-left: 38px; width: 24px; margin-top: -2px; }
.ty-w { width: 24px; height: 18px; margin-left: 32px; }
.ty-v { width: 24px; height: 20px; margin-left: 11px; }
.ty-b { width: 25px; height: 22px; margin-left: 11px; }
.tray p { margin-left: auto; margin-top: -2px; text-align: right; font-size: 18px; line-height: 25px; white-space: nowrap; }
```
